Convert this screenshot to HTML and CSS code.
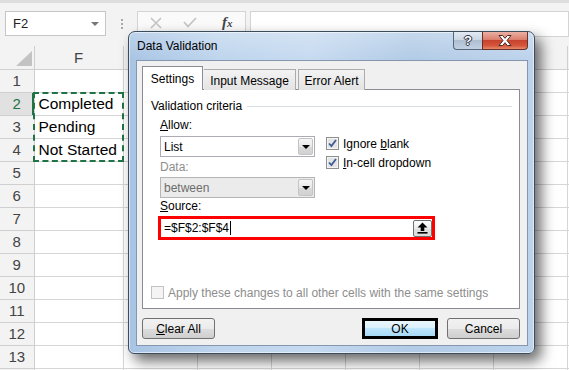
FILE: index.html
```html
<!DOCTYPE html>
<html lang="en">
<head>
    <meta charset="UTF-8">
    <title>Data Validation</title>
    <link rel="stylesheet" href="styles.css">
</head>
<body>
<div class="app">
    <!-- Formula bar -->
    <div class="formula-bar">
        <div class="name-box"><span>F2</span><span class="name-arrow"></span></div>
        <div class="grip"></div>
        <div class="fx-buttons">
            <svg class="fx-cancel" width="12" height="12" viewBox="0 0 12 12"><path d="M1 1 L11 11 M11 1 L1 11" stroke="#c4c4c4" stroke-width="1.6" fill="none"/></svg>
            <svg class="fx-enter" width="14" height="11" viewBox="0 0 14 11"><path d="M1 5 L5 9.5 L13 1" stroke="#c4c4c4" stroke-width="1.8" fill="none"/></svg>
            <span class="fx">f<small>x</small></span>
        </div>
        <div class="formula-input"></div>
    </div>

    <!-- Worksheet (columns right of F sit under the dialog) -->
    <div class="sheet-wrap">
        <table class="sheet">
            <colgroup>
                <col class="c-head"><col class="c-f">
                <col class="c-std"><col class="c-std"><col class="c-std"><col class="c-std"><col class="c-std"><col class="c-std"><col class="c-std">
            </colgroup>
            <tr class="col-heads">
                <th class="corner"><span class="corner-mark"></span></th>
                <th>F</th><th></th><th></th><th></th><th></th><th></th><th></th><th></th>
            </tr>
            <tr><th>1</th><td></td><td></td><td></td><td></td><td></td><td></td><td></td><td></td></tr>
            <tr><th class="active">2</th><td>Completed</td><td></td><td></td><td></td><td></td><td></td><td></td><td></td></tr>
            <tr><th>3</th><td>Pending</td><td></td><td></td><td></td><td></td><td></td><td></td><td></td></tr>
            <tr><th>4</th><td>Not Started</td><td></td><td></td><td></td><td></td><td></td><td></td><td></td></tr>
            <tr><th>5</th><td></td><td></td><td></td><td></td><td></td><td></td><td></td><td></td></tr>
            <tr><th>6</th><td></td><td></td><td></td><td></td><td></td><td></td><td></td><td></td></tr>
            <tr><th>7</th><td></td><td></td><td></td><td></td><td></td><td></td><td></td><td></td></tr>
            <tr><th>8</th><td></td><td></td><td></td><td></td><td></td><td></td><td></td><td></td></tr>
            <tr><th>9</th><td></td><td></td><td></td><td></td><td></td><td></td><td></td><td></td></tr>
            <tr><th>10</th><td></td><td></td><td></td><td></td><td></td><td></td><td></td><td></td></tr>
            <tr><th>11</th><td></td><td></td><td></td><td></td><td></td><td></td><td></td><td></td></tr>
            <tr><th>12</th><td></td><td></td><td></td><td></td><td></td><td></td><td></td><td></td></tr>
            <tr><th>13</th><td></td><td></td><td></td><td></td><td></td><td></td><td></td><td></td></tr>
            <tr><th></th><td></td><td></td><td></td><td></td><td></td><td></td><td></td><td></td></tr>
        </table>
        <div class="marquee"></div>
    </div>

    <!-- Data Validation dialog -->
    <div class="dialog">
        <div class="titlebar">
            <span class="title">Data Validation</span>
            <div class="caption-buttons">
                <div class="cap-help">?</div>
                <div class="cap-close">
                    <svg width="14" height="11" viewBox="0 0 14 11"><path d="M1 0.5 H4.6 L7 3.3 L9.4 0.5 H13 L9 5.5 L13 10.5 H9.4 L7 7.7 L4.6 10.5 H1 L5 5.5 Z" fill="#fff" stroke="#4a2a24" stroke-width="1"/></svg>
                </div>
            </div>
        </div>

        <div class="client">
            <div class="tabs">
                <div class="tab active">Settings</div>
                <div class="tab tab-input">Input Message</div>
                <div class="tab tab-error">Error Alert</div>
            </div>

            <div class="panel">
                <div class="group-title"><span>Validation criteria</span><span class="rule"></span></div>

                <div class="criteria">
                    <div class="criteria-top">
                        <div class="fields">
                            <div class="field-label"><u>A</u>llow:</div>
                            <div class="combo">
                                <span>List</span>
                                <span class="combo-btn"><span class="tri"></span></span>
                            </div>
                            <div class="field-label disabled">Data:</div>
                            <div class="combo disabled">
                                <span>between</span>
                                <span class="combo-btn"><span class="tri"></span></span>
                            </div>
                        </div>
                        <div class="checks">
                            <div class="check">
                                <svg class="box" width="13" height="13" viewBox="0 0 13 13"><rect x="0.5" y="0.5" width="12" height="12" fill="#f4f4f4" stroke="#8e8f8f"/><rect x="2" y="2" width="9" height="9" fill="#e4e4e4"/><path d="M3 6.5 L5.4 9 L10 3" stroke="#3f5a96" stroke-width="1.8" fill="none"/></svg>
                                <span>Ignore <u>b</u>lank</span>
                            </div>
                            <div class="check">
                                <svg class="box" width="13" height="13" viewBox="0 0 13 13"><rect x="0.5" y="0.5" width="12" height="12" fill="#f4f4f4" stroke="#8e8f8f"/><rect x="2" y="2" width="9" height="9" fill="#e4e4e4"/><path d="M3 6.5 L5.4 9 L10 3" stroke="#3f5a96" stroke-width="1.8" fill="none"/></svg>
                                <span><u>I</u>n-cell dropdown</span>
                            </div>
                        </div>
                    </div>

                    <div class="field-label source-label"><u>S</u>ource:</div>
                    <div class="source">
                        <span class="source-text">=$F$2:$F$4</span><span class="caret"></span>
                        <span class="ref-btn">
                            <svg width="11" height="12" viewBox="0 0 11 12"><path d="M5.5 0.5 L10.5 5.5 H7.3 V9 H3.7 V5.5 H0.5 Z" fill="#000"/><rect x="0.5" y="10" width="10" height="1.6" fill="#000"/></svg>
                        </span>
                    </div>
                </div>

                <div class="apply">
                    <span class="apply-box"></span>
                    <span>Apply these changes to all other cells with the same settings</span>
                </div>
            </div>

            <div class="buttons">
                <div class="btn"><u>C</u>lear All</div>
                <div class="btn btn-ok">OK</div>
                <div class="btn">Cancel</div>
            </div>
        </div>
    </div>
</div>
</body>
</html>
```

FILE: styles.css
```css
body {
    margin: 0;
    font-family: "Liberation Sans", Arial, sans-serif;
    background: #fff;
}

.app {
    position: relative;
    width: 569px;
    height: 370px;
    overflow: hidden;
}

/* ---------- formula bar ---------- */

.formula-bar {
    height: 46px;
    box-sizing: border-box;
    border-top: 3px solid #dedede;
    padding-top: 8px;
    background: #f3f3f3;
    display: flex;
    align-items: flex-start;
}

.name-box {
    margin-left: 5px;
    width: 101px;
    height: 25px;
    box-sizing: border-box;
    border: 1px solid #c6c6c6;
    background: #fff;
    display: flex;
    align-items: center;
    padding-left: 7px;
    font-size: 13px;
    color: #222;
}

.name-arrow {
    margin-left: auto;
    margin-right: 6px;
    border-left: 4px solid transparent;
    border-right: 4px solid transparent;
    border-top: 4px solid #777;
}

.grip {
    margin: 8px 0 0 15px;
    width: 2px;
    height: 10px;
    background: repeating-linear-gradient(#a8a8a8 0 2px, transparent 2px 4px);
}

.fx-buttons {
    margin-left: 14px;
    width: 109px;
    height: 23px;
    box-sizing: border-box;
    border: 1px solid #d4d4d4;
    background: #fafafa;
    display: flex;
    align-items: center;
}

.fx-cancel {
    margin-left: 12px;
}

.fx-enter {
    margin-left: 21px;
}

.fx {
    margin-left: 25px;
    font-family: "Liberation Serif", serif;
    font-style: italic;
    font-weight: bold;
    font-size: 15px;
    color: #444;
}

.fx small {
    font-size: 11px;
}

.formula-input {
    margin-left: 4px;
    flex: 1;
    height: 26px;
    box-sizing: border-box;
    border: 1px solid #d4d4d4;
    background: #fff;
}

/* ---------- worksheet ---------- */

.sheet-wrap {
    position: relative;
}

.sheet {
    border-collapse: collapse;
    table-layout: fixed;
    width: 641px;
}

.c-head { width: 34px; }
.c-f { width: 89px; }
.c-std { width: 74px; }

.sheet th,
.sheet td {
    height: 23px;
    padding: 0;
    box-sizing: border-box;
    border: 1px solid #d6d6d6;
    border-top: none;
    border-left: none;
}

.sheet th {
    background: #f3f3f3;
    font-weight: normal;
    font-size: 15px;
    color: #444;
    text-align: center;
    border-color: #cfcfcf;
}

.sheet th.active {
    background: #e1e1e1;
    color: #217346;
    box-shadow: inset -2px 0 #217346;
}

.corner {
    position: relative;
}

.corner-mark {
    position: absolute;
    right: 2px;
    bottom: 3px;
    border-left: 16px solid transparent;
    border-bottom: 15px solid #c3c3c3;
}

.sheet td {
    font-size: 15.5px;
    color: #000;
    padding-left: 4px;
    padding-top: 1px;
    white-space: nowrap;
}

.marquee {
    position: absolute;
    left: 33px;
    top: 46px;
    width: 91px;
    height: 70px;
    box-sizing: border-box;
    border: 2px dashed #217346;
}

/* ---------- dialog ---------- */

.dialog {
    position: absolute;
    left: 128px;
    top: 31px;
    width: 407px;
    height: 323px;
    box-sizing: border-box;
    border: 1px solid #3c4b5e;
    border-radius: 7px 7px 6px 6px;
    background:
        linear-gradient(180deg, rgba(255, 255, 255, 0.25), rgba(255, 255, 255, 0) 28px),
        linear-gradient(90deg, #a8c4e4 0%, #bed5ed 22%, #c6daf0 45%, #b2cbe6 70%, #bdd3ec 100%);
    box-shadow: inset 0 0 0 1px rgba(255, 255, 255, 0.55), 6px 7px 14px rgba(0, 0, 0, 0.6);
    padding: 0 6px 7px 7px;
    display: flex;
    flex-direction: column;
}

.titlebar {
    height: 28px;
    display: flex;
    align-items: flex-start;
}

.title {
    margin: 7px 0 0 1px;
    font-size: 12px;
    line-height: 15px;
    color: #000;
}

.caption-buttons {
    margin-left: auto;
    display: flex;
}

.cap-help,
.cap-close {
    height: 18px;
    box-sizing: border-box;
    border: 1px solid #56677c;
    border-top: none;
    display: flex;
    align-items: center;
    justify-content: center;
}

.cap-help {
    width: 29px;
    border-radius: 0 0 0 4px;
    border-right: none;
    background: linear-gradient(#e2eaf3, #cbd7e4 45%, #aebfd2 50%, #c2d2e3);
    color: #fff;
    font-weight: bold;
    font-size: 13px;
    text-shadow: 0 0 1px #223, 1px 0 0 #334, -1px 0 0 #334, 0 1px 0 #334, 0 -1px 0 #334;
}

.cap-close {
    width: 46px;
    border-radius: 0 0 4px 0;
    border-color: #6a3128;
    background: linear-gradient(#eab0a4, #dc7f6d 45%, #c7432d 50%, #d5553b 80%, #e58a6c);
}

.client {
    flex: 1;
    box-sizing: border-box;
    border: 1px solid #8497ae;
    background: #f0f0f0;
    padding: 5px 7px 6px 5px;
    display: flex;
    flex-direction: column;
    font-size: 12px;
    color: #000;
}

/* tabs */

.tabs {
    display: flex;
    align-items: flex-end;
    margin-bottom: -1px;
    position: relative;
    z-index: 1;
}

.tab {
    height: 21px;
    box-sizing: border-box;
    border: 1px solid #acacac;
    border-bottom: none;
    background: linear-gradient(#f3f3f3, #e3e3e3);
    display: flex;
    align-items: center;
    justify-content: center;
    padding-top: 2px;
}

.tab.active {
    width: 61px;
    height: 24px;
    border-color: #898c95;
    background: #fff;
    padding-top: 1px;
    padding-bottom: 1px;
}

.tab-input {
    width: 92px;
    margin-left: 1px;
    border-left: none;
}

.tab-error {
    width: 67px;
    margin-left: 2px;
}

.panel {
    height: 220px;
    box-sizing: border-box;
    border: 1px solid #898c95;
    background: #fff;
    padding: 9px 7px 0 8px;
    display: flex;
    flex-direction: column;
}

.group-title {
    display: flex;
    align-items: center;
    line-height: 15px;
}

.rule {
    flex: 1;
    height: 1px;
    margin-left: 5px;
    background: #d5dfe5;
}

.criteria {
    margin-top: 4px;
    padding-left: 9px;
}

.criteria-top {
    display: flex;
}

.fields {
    width: 155px;
}

.field-label {
    line-height: 15px;
}

.field-label.disabled {
    margin-top: 3px;
    color: #8d8d8d;
}

.combo {
    margin-top: 3px;
    height: 21px;
    box-sizing: border-box;
    border: 1px solid #abadb3;
    background: #fff;
    display: flex;
    align-items: center;
    padding-left: 3px;
}

.combo.disabled {
    margin-top: 2px;
    background: #ebebeb;
    border-color: #b5b5b5;
    color: #6d6d6d;
}

.combo-btn {
    margin-left: auto;
    margin-right: 1px;
    width: 15px;
    height: 17px;
    box-sizing: border-box;
    border: 1px solid #c4c4c4;
    border-radius: 2px;
    background: linear-gradient(#f6f6f6, #e8e8e8 50%, #d9d9d9 50%, #d2d2d2);
    display: flex;
    align-items: center;
    justify-content: center;
}

.tri {
    border-left: 4px solid transparent;
    border-right: 4px solid transparent;
    border-top: 4px solid #000;
}

.checks {
    margin-left: 11px;
    padding-top: 19px;
}

.check {
    display: flex;
    align-items: center;
    height: 13px;
    margin-bottom: 6px;
}

.check .box {
    margin-right: 4px;
    flex: none;
}

.source-label {
    margin-top: 1px;
}

.source {
    margin: 2px 0 0 -2px;
    width: 277px;
    height: 24px;
    box-sizing: border-box;
    border: 3px solid #ff0000;
    background: #fff;
    display: flex;
    align-items: center;
    padding-left: 3px;
}

.caret {
    width: 1px;
    height: 14px;
    margin-left: 1px;
    background: #000;
}

.ref-btn {
    margin-left: auto;
    width: 19px;
    height: 17px;
    box-sizing: border-box;
    border: 1px solid #707070;
    border-radius: 2px;
    background: linear-gradient(#fefefe, #ececec 50%, #e0e0e0 50%, #dcdcdc);
    display: flex;
    align-items: center;
    justify-content: center;
}

.apply {
    margin-top: auto;
    margin-bottom: 9px;
    display: flex;
    align-items: center;
    height: 13px;
    color: #8d8d8d;
}

.apply-box {
    width: 13px;
    height: 13px;
    box-sizing: border-box;
    border: 1px solid #c2c2c2;
    background: #f4f4f4;
    margin-right: 4px;
}

/* buttons */

.buttons {
    margin-top: 9px;
    display: flex;
}

.btn {
    width: 73px;
    height: 21px;
    box-sizing: border-box;
    border: 1px solid #707070;
    border-radius: 3px;
    background: linear-gradient(#f2f2f2, #ebebeb 50%, #dddddd 50%, #cfcfcf);
    display: flex;
    align-items: center;
    justify-content: center;
}

.btn-ok {
    margin-left: auto;
    margin-right: 9px;
    width: 76px;
    border: 3px solid #000;
    border-radius: 0;
    background: linear-gradient(#eaf6fd, #d9f0fc 50%, #bee6fd 50%, #a7d9f5);
}
```
